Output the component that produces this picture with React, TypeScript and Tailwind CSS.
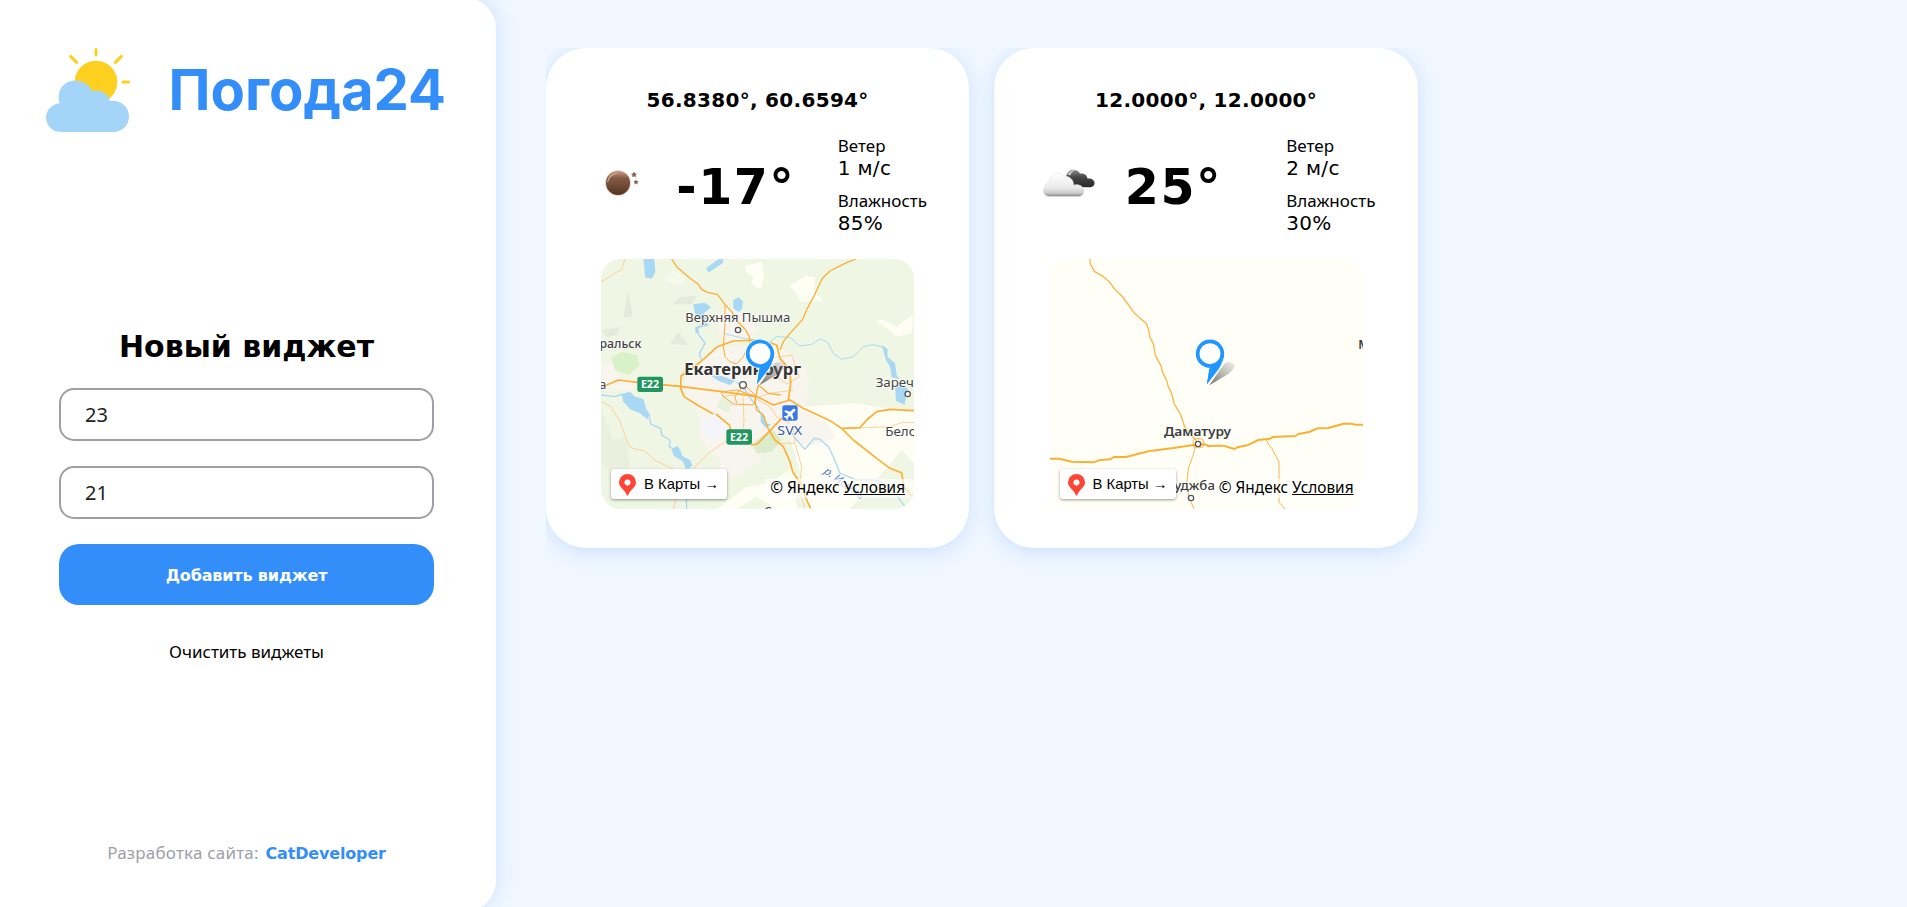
import type { ReactNode } from 'react';

const SANS = "font-['DejaVu_Sans',sans-serif]";
const TEXT = "font-['Noto_Sans',sans-serif]";

function Logo() {
  return (
    <svg viewBox="0 0 84 84" className="h-[84px] w-[84px] shrink-0">
      <circle cx="50" cy="34" r="21.3" fill="#fdd020" />
      <path d="M50 1.6V7M24.6 8.4l6 6M75.4 8.4l-6 6M77 34h5.6" stroke="#fdd020" strokeWidth="3" strokeLinecap="round" />
      <path
        d="M14 84C6 84 0 77 0 69.600C0 62 6 56 13.600 55.200C10 41 19 32.500 29.500 32.500C37.500 32.500 44 37.500 46.300 43.300C53 41 62 44.500 63.700 52.800C74.500 51.500 83 58.500 83 68.500C83 77.500 76 84 67.500 84Z"
        fill="#a4d4f7"
      />
    </svg>
  );
}

function MoonIcon() {
  return (
    <svg viewBox="0 0 36 26" className="ml-[10px] h-[26px] w-[36px]">
      <defs>
        <linearGradient id="moon" x1="0" y1="0" x2="0" y2="1">
          <stop offset="0" stopColor="#c79a80" />
          <stop offset="0.3" stopColor="#855a45" />
          <stop offset="1" stopColor="#553522" />
        </linearGradient>
      </defs>
      <circle cx="14" cy="13" r="12.800" fill="#cdb9ad" opacity="0.7" />
      <circle cx="14" cy="13" r="12" fill="url(#moon)" />
      <path d="M3.600 12A10.500 10.500 0 0 1 13 3.200" fill="none" stroke="#d6b5a0" strokeWidth="1.100" />
      <path d="M30 1.500l1 2 2 .2-1.500 1.500.5 2.100-2-1-2 1 .5-2.100L27 3.700l2-.2zM32 9.500l.8 1.600 1.900.2-1.400 1.300.4 1.900-1.700-.9-1.700.9.400-1.900-1.400-1.300 1.900-.2z" fill="#85604f" />
    </svg>
  );
}

function CloudsIcon() {
  return (
    <svg viewBox="0 0 52 28" className="ml-px h-[28px] w-[52px]">
      <defs>
        <linearGradient id="cloudFront" x1="0" y1="0" x2="0" y2="1">
          <stop offset="0" stopColor="#ffffff" />
          <stop offset="0.6" stopColor="#ececec" />
          <stop offset="0.85" stopColor="#cccccc" />
          <stop offset="1" stopColor="#858585" />
        </linearGradient>
        <linearGradient id="cloudBack" x1="0" y1="0" x2="0" y2="1">
          <stop offset="0" stopColor="#8b8b8b" />
          <stop offset="0.4" stopColor="#484848" />
          <stop offset="1" stopColor="#292929" />
        </linearGradient>
      </defs>
      <path d="M30 18C23 14 22 8 24 5C26 0 34-1 37 4.500C41 4 44 6 44.500 9.500C48.500 9 51.500 11 51.500 14C51.500 17 49 18.200 46.500 18.200Z" fill="url(#cloudBack)" />
      <path d="M24.500 5.500C26 1.500 31 .8 33 1.500C29.500 2 28 4 27.500 6.500Z" fill="#c6c6c6" />
      <path d="M7 27.500C2 27.500 0 24 0.500 20.500C1 16.500 3 14.500 6 14C6 7 10 4 14.500 4C17 4 19 5 20.500 7C25 6.500 31 10 30.500 16.200C36 14.500 41 17.500 41 22C41 25.500 38.500 27.500 35 27.500Z" fill="url(#cloudFront)" stroke="#e2e2e2" strokeWidth="0.600" />
    </svg>
  );
}

function Placemark() {
  return (
    <g>
      <path d="M508 406L554 340Q574 330 584 346Q584 358 565 372Z" fill="url(#pinShade)" />
      <g stroke="#ffffff" strokeWidth="5" paintOrder="stroke">
        <path d="M552 318Q547 346 526 370L500 404L510 345Z" fill="#2196ff" />
        <circle cx="510" cy="311" r="42.500" fill="#2196ff" />
      </g>
      <path d="M552 314Q547 344 526 368L502 400L510 345Z" fill="#2196ff" />
      <circle cx="510" cy="311" r="31.500" fill="#ffffff" />
    </g>
  );
}

function PinShade() {
  return (
    <defs>
      <linearGradient id="pinShade" x1="0" y1="1" x2="1" y2="0">
        <stop offset="0" stopColor="#45413d" stopOpacity="0.8" />
        <stop offset="1" stopColor="#8d8983" stopOpacity="0.15" />
      </linearGradient>
    </defs>
  );
}

function EkbMap() {
  return (
    <svg viewBox="33 27 939 750" className="h-[250px] w-[313px]">
      <PinShade />
      <rect x="33" y="27" width="939" height="750" fill="#eff6e3" />
      {/* fields and settlements */}
      <g fill="#fefef5">
        <path d="M465 48L515 35L523 78L512 120L482 98L492 82L470 68Z" />
        <path d="M598 108L650 76L676 85L672 122L698 152L634 157L618 128Z" />
        <path d="M858 213L875 208L921 231L969 192L966 249L918 262L900 240Z" />
        <path d="M640 470L800 460L972 490L972 640L935 600L850 700L780 777L660 777L600 560Z" />
        <path d="M540 700L610 650L620 777L560 777L500 740L440 777L380 777L470 710Z" />
        <path d="M215 90L250 60L290 90L260 108Z" opacity="0.500" />
      </g>
      <g fill="#e4ebda">
        <path d="M100 205L115 122L128 198Z" />
        <path d="M250 163L270 142L320 137L305 162Z" />
        <path d="M34 240L90 232L80 255L50 262Z" />
        <path d="M240 282L265 247L295 285Z" />
        <path d="M34 480L70 570L105 560L120 650L90 690L33 640Z" opacity="0.500" />
      </g>
      <g fill="#f8f4ee">
        <path d="M405 170L470 180L500 240L480 268L400 275L380 230Z" />
        <path d="M330 340L390 292L560 285L640 340L660 400L640 480L710 515L735 565L650 590L600 560L540 540L505 590L520 625L430 690L395 640L330 570L330 500L290 440L285 385Z" />
        <path d="M33 345L60 335L95 385L150 390L125 420L33 415Z" />
        <path d="M385 640L440 620L460 660L400 690Z" />
      </g>
      <path d="M330 530L372 490L405 520L420 540L365 570Z" fill="#f4f5fa" />
      <path d="M65 325L95 305L140 315L150 345L115 375L75 360Z" fill="#d8f1c6" />
      <path d="M485 583L545 535L575 570L545 605L500 610Z" fill="#dcecca" />
      <path d="M380 470L400 430L430 460L415 490Z" fill="#e7f1dc" />
      {/* water */}
      <g fill="#a9d8f4">
        <path d="M160 27L193 27L196 66L186 85L166 83Z" />
        <path d="M348 55L385 28L400 28L398 40L355 68Z" />
        <path d="M430 150L447 142L459 155L456 178L447 186L430 176Z" />
        <path d="M310 163L345 158L363 172L342 190L350 207L325 210L315 190Z" />
        <path d="M316 232L350 218L358 226L326 234L326 250L316 248Z" />
        <path d="M95 432L120 425L135 440L160 446L168 475L180 495L172 508L150 490L120 478L100 455Z" />
        <path d="M245 598L262 588L272 602L276 618L300 630L308 648L288 658L278 634L252 618Z" />
        <path d="M875 285L893 298L892 320L915 340L920 375L928 388L905 382L900 350L888 330Z" />
        <path d="M915 410L945 405L960 430L948 438L944 465L918 452Z" />
        <path d="M360 375L395 378L435 392L420 405L385 392Z" />
        <path d="M512 485L526 500L525 518L545 525L525 532L512 515Z" />
      </g>
      <g fill="none" stroke="#a9d8f4" strokeWidth="4">
        <path d="M320 245L345 280L328 310L335 330M440 395L465 420L485 450L505 475L510 490M535 530L530 535" />
        <path d="M400 250L460 265L540 275L560 260L600 262L630 288L665 283L690 267L712 275L730 310L755 328L790 320L820 290L850 284L880 292" strokeWidth="3" />
        <path d="M33 435L75 440L98 432M178 500L182 522L212 535L215 555L240 570L238 590L255 600M298 650L288 700L290 777" />
        <path d="M605 550L620 570L645 598L672 565L690 568L715 590L730 620L750 670L800 690L860 690L900 710L945 770" />
      </g>
      {/* secondary roads */}
      <g fill="none" stroke="#fbd09a" strokeWidth="3">
        <path d="M33 96L75 70L95 58L105 27" />
        <path d="M33 455L62 470L88 510L118 590L135 597L165 603L190 628L265 665L264 725L250 777" />
        <path d="M415 568L355 610L320 645L285 690L262 735" />
        <path d="M555 580L615 580L635 650L628 720L645 777M615 580L610 540" />
        <path d="M458 420L462 510L460 535M400 440L470 430L540 470L560 500L600 520" />
        <path d="M570 320L605 315L628 380L590 402L560 380M510 440L540 430L610 420" />
        <path d="M760 536L900 530L935 518L972 518" />
      </g>
      {/* main roads */}
      <g fill="none" stroke="#fdaf35" strokeWidth="4" strokeLinejoin="round">
        <path d="M245 27L260 50L300 85L325 103L335 118L352 127L382 133L405 163L425 185L440 212L465 237L478 260L480 275" />
        <path d="M798 27L765 40L720 63L697 85L672 138L652 175L638 208L600 250L580 275L570 300" />
        <path d="M405 163L405 220L400 290L405 320L420 335L440 342L460 320L480 275" strokeWidth="3" />
        <path d="M393 425L400 440L430 462L490 465L500 440L470 410M395 425L440 420L500 440M440 460L435 440L455 410" strokeWidth="3" />
        <path d="M535 537L520 495L500 480L495 450L505 405L535 430L572 435" />
      </g>
      <g fill="none" stroke="#fdaf35" strokeWidth="5" strokeLinejoin="round">
        <path d="M45 407L85 390L150 398M215 404L270 409L395 425M370 492L322 465L282 440L272 415L273 378L335 333L382 290L430 273L515 270L560 285L570 325L600 360L602 400L595 450" />
        <path d="M395 425L502 440M378 492L405 515L418 525L425 550M483 585L502 582L540 542L575 505" />
        <path d="M502 440L550 465L600 450L640 475L720 512L755 535L790 570L860 625L900 655L935 668L940 700M942 712L968 740" />
        <path d="M755 535L810 533L830 510L860 485L900 478L972 482" />
        <path d="M535 537L555 570L580 590L600 635L608 665L635 705L650 750L662 775" />
      </g>
      {/* place names */}
      <g className={TEXT} fill="#434343" stroke="#ffffff" strokeWidth="4" paintOrder="stroke" strokeLinejoin="round">
        <text x="286" y="217" fontSize="39" textLength="315" lengthAdjust="spacingAndGlyphs">Верхняя Пышма</text>
        <text x="154" y="293" fontSize="37" fontWeight="500" textAnchor="end">Уральск</text>
        <text x="283" y="375" fontSize="48" fontWeight="700" fill="#333333" textLength="350" lengthAdjust="spacingAndGlyphs">Екатеринбург</text>
        <text x="857" y="410" fontSize="40">Заречный</text>
        <text x="886" y="557" fontSize="40">Белоярский</text>
        <text x="28" y="418" fontSize="38">а</text>
        <text x="522" y="798" fontSize="36">Сысерть</text>
        <text x="562" y="554" fontSize="39" fill="#31599e" textLength="74" lengthAdjust="spacingAndGlyphs">SVX</text>
        <text x="700" y="668" fontSize="34" fontStyle="italic" fill="#5581c6" transform="rotate(36 700 668)">р. Исеть</text>
      </g>
      <g fill="#ffffff" stroke="#555555" strokeWidth="4">
        <circle cx="444" cy="240" r="8" />
        <circle cx="459" cy="405" r="10" />
        <circle cx="953" cy="432" r="8" />
      </g>
      <g className={TEXT} fontSize="32" fontWeight="700" fill="#ffffff" textAnchor="middle">
        <rect x="142" y="380" width="77" height="46" rx="7" fill="#229660" />
        <text x="180" y="414">E22</text>
        <rect x="409" y="538" width="77" height="46" rx="7" fill="#229660" />
        <text x="447" y="573">E22</text>
      </g>
      <rect x="577" y="466" width="46" height="46" rx="7" fill="#3a78e7" />
      <path
        d="M614 476c-3-3-8-1-11 2l-7 7-17-5-4 4 14 9-7 8-6-1-3 3 8 4 4 8 3-3-1-6 8-7 9 14 4-4-5-17 7-7c3-3 6-6 4-9z"
        transform="translate(94 73) scale(0.85)"
        fill="#ffffff"
      />
      <Placemark />
    </svg>
  );
}

function DamaturuMap() {
  return (
    <svg viewBox="30 27 939 750" className="h-[250px] w-[313px]">
      <rect x="30" y="27" width="939" height="750" fill="#fffff8" />
      <g fill="none" stroke="#fcb547" strokeWidth="4" strokeLinejoin="round">
        <path d="M150 27L151 42L163 64L190 80L208 95L222 115L248 141L282 188L320 222L326 240L330 262L341 284L346 316L364 349L368 368L380 392L385 410L395 430L403 462L422 494L434 530L450 553L470 572" />
        <path d="M466 590L458 620L446 652L440 700L446 740L462 777M679 570L685 582L696 596L717 636L717 757L735 777" strokeWidth="3" />
        <rect x="459" y="566" width="32" height="27" rx="10" strokeWidth="3" />
      </g>
      <path
        d="M30 626L58 626L95 635L160 637L177 631L210 628L222 621L258 621L325 604L400 594L466 584L495 583L505 588L550 587L583 597L592 592L622 586L655 570L690 566L698 561L765 558L775 552L808 546L832 535L865 534L910 521L935 521L943 524L969 524"
        fill="none"
        stroke="#fdb02f"
        strokeWidth="6"
        strokeLinejoin="round"
      />
      <g className={TEXT} fill="#3b3b3b" stroke="#ffffff" strokeWidth="4" paintOrder="stroke" strokeLinejoin="round">
        <text x="372" y="557" fontSize="39" fontWeight="600" textLength="201" lengthAdjust="spacingAndGlyphs">Даматуру</text>
        <text x="525" y="719" fontSize="40" fontWeight="500" textAnchor="end">Буни-Гуджба</text>
        <text x="955" y="297" fontSize="37" fontWeight="600">Майдугури</text>
      </g>
      <g fill="#ffffff" stroke="#555555" strokeWidth="4">
        <circle cx="474" cy="582" r="8" />
        <circle cx="453" cy="744" r="8" />
      </g>
      <Placemark />
    </svg>
  );
}

type Weather = {
  coords: string;
  temp: string;
  wind: string;
  humidity: string;
  icon: ReactNode;
  map: ReactNode;
};

const widgets: Weather[] = [
  { coords: '56.8380°, 60.6594°', temp: '-17°', wind: '1 м/с', humidity: '85%', icon: <MoonIcon />, map: <EkbMap /> },
  { coords: '12.0000°, 12.0000°', temp: '25°', wind: '2 м/с', humidity: '30%', icon: <CloudsIcon />, map: <DamaturuMap /> },
];

function Reading({ label, value }: { label: string; value: string }) {
  return (
    <div>
      <div className={`${TEXT} text-[17px] leading-5`}>{label}</div>
      <div className="text-xl leading-6 tracking-[0.300px]">{value}</div>
    </div>
  );
}

function WidgetCard({ coords, temp, wind, humidity, icon, map }: Weather) {
  return (
    <article className="h-[500px] w-[423.500px] shrink-0 rounded-[40px] bg-white pt-10 shadow-[0_4px_20px_rgba(52,142,250,0.2)]">
      <h2 className="text-center text-xl leading-6 font-bold tracking-[0.300px]">{coords}</h2>
      <div className="mt-6 grid h-[100px] grid-cols-[82.500px_161.500px_1fr] pl-12">
        <div className="flex items-center pb-[6px]">{icon}</div>
        <div className="flex items-center pt-[3px] text-[49px] font-bold tracking-[1.500px]">{temp}</div>
        <div className="flex flex-col gap-[11px]">
          <Reading label="Ветер" value={wind} />
          <Reading label="Влажность" value={humidity} />
        </div>
      </div>
      <div className="relative mx-auto mt-[23px] h-[250px] w-[313px] overflow-hidden rounded-[20px]">
        {map}
        <a className="absolute bottom-[10px] left-[10px] flex h-[30px] w-[116px] items-center rounded-[3px] bg-white pt-px pl-2 font-['Liberation_Sans',sans-serif] text-[14.800px] shadow-[0_1px_3px_rgba(0,0,0,0.4)]">
          <svg viewBox="0 0 17 22" className="mr-2 h-[22px] w-[17px] shrink-0">
            <path d="M8.500 0A8.500 8.500 0 0 0 0 8.500C0 13.500 5.500 15 8 21.500H9C11.500 15 17 13.500 17 8.500A8.500 8.500 0 0 0 8.500 0Z" fill="#ff4433" />
            <circle cx="8.500" cy="8.500" r="3" fill="#ffffff" />
          </svg>
          В Карты →
        </a>
        <p className={`${TEXT} absolute right-0 bottom-[11px] h-[19px] bg-white/65 pr-[9px] pl-[5px] text-[15.400px] leading-[18px] whitespace-nowrap`}>
          © Яндекс <a className="underline">Условия</a>
        </p>
      </div>
    </article>
  );
}

const field = `${TEXT} h-[53px] w-full rounded-[15px] border-2 border-[#a09fa8] bg-white px-6 text-xl text-[#222222] outline-none`;

export default function App() {
  return (
    <div className={`${SANS} flex h-screen overflow-hidden bg-[#f0f7ff] text-black`}>
      <aside className="-mt-0.5 flex h-[913px] w-[496px] shrink-0 flex-col rounded-r-[30px] bg-white pt-[50px] shadow-[0_0_20px_rgba(52,142,250,0.2)]">
        <header className="flex h-[84px] items-center gap-[38.500px] pl-[46px]">
          <Logo />
          <h1 className="font-['Inter',sans-serif] text-[56.200px] leading-[84px] font-bold whitespace-nowrap text-[#348efa]">Погода24</h1>
        </header>
        <form className="mt-[195px] ml-[59px] flex w-[375px] flex-col items-center">
          <h2 className="text-[30px] leading-10 font-bold">Новый виджет</h2>
          <div className="mt-[21px] flex w-full flex-col gap-[25px]">
            <input className={field} defaultValue="23" />
            <input className={field} defaultValue="21" />
            <button type="button" className="h-[61px] rounded-[20px] bg-[#348efa] pt-0.5 text-base font-bold tracking-[-0.150px] text-white">
              Добавить виджет
            </button>
          </div>
          <button type="button" className={`${TEXT} mt-[35px] text-[17px] leading-6`}>
            Очистить виджеты
          </button>
        </form>
        <footer className={`${TEXT} mt-auto mb-[45px] ml-[59px] w-[375px] text-center text-[17px] leading-6 tracking-[0.200px] text-[#a09fa8]`}>
          Разработка сайта:{' '}
          <a className={`${SANS} ml-0.5 text-base font-bold tracking-[-0.150px] text-[#348efa]`}>CatDeveloper</a>
        </footer>
      </aside>
      <main className="mt-12 ml-[49.800px] flex flex-1 items-start gap-[25px] overflow-hidden">
        {widgets.map((w) => (
          <WidgetCard key={w.coords} {...w} />
        ))}
      </main>
    </div>
  );
}
